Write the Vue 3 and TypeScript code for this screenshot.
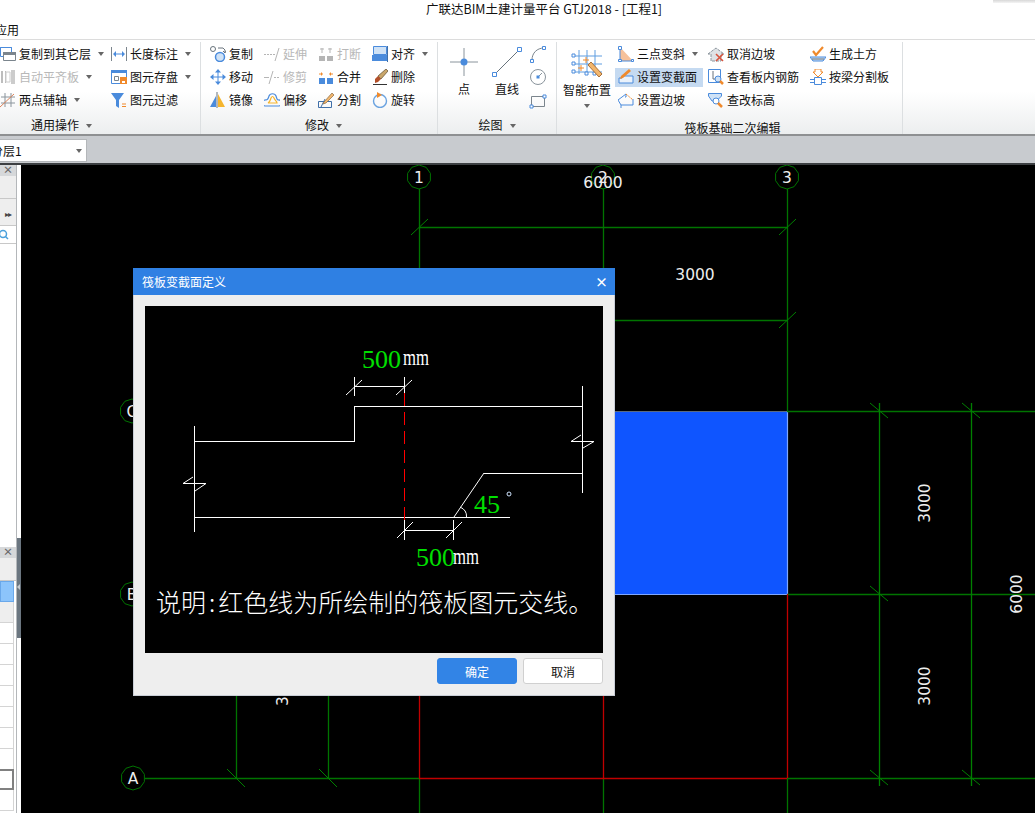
<template>
  <div class="app">
    <div class="corner" />
    <header class="title">广联达BIM土建计量平台 GTJ2018 - [工程1]</header>
    <div class="menu"><span>应用</span></div>

    <div class="ribbon">
      <section class="group g-common">
        <div class="tools">
          <div v-for="t in commonTools" :key="t.label" class="tool" :class="{ off: t.off }">
            <svg class="ico" viewBox="0 0 16 16" v-html="icons[t.icon]" />
            <span>{{ t.label }}</span>
            <i v-if="t.caret" class="caret" />
          </div>
        </div>
        <div class="label">通用操作<i class="caret" /></div>
      </section>

      <section class="group g-edit">
        <div class="tools">
          <div v-for="t in editTools" :key="t.label" class="tool" :class="{ off: t.off }">
            <svg class="ico" viewBox="0 0 16 16" v-html="icons[t.icon]" />
            <span>{{ t.label }}</span>
            <i v-if="t.caret" class="caret" />
          </div>
        </div>
        <div class="label">修改<i class="caret" /></div>
      </section>

      <section class="group g-draw">
        <div class="draw-row">
          <div class="big">
            <svg width="34" height="34" viewBox="0 0 34 34">
              <path d="M17 3v28M3 17h28" stroke="#8a949c" fill="none" />
              <circle cx="17" cy="17" r="3.5" fill="#4a8bdc" />
            </svg>
            <span>点</span>
          </div>
          <div class="big">
            <svg width="34" height="34" viewBox="0 0 34 34">
              <path d="M4 30L30 4" stroke="#68737c" fill="none" />
              <path d="M2.500 27.500h4v4h-4zM27.500 2.500h4v4h-4z" fill="#fff" stroke="#4a8bdc" />
            </svg>
            <span>直线</span>
          </div>
          <div class="mini">
            <svg width="18" height="18" viewBox="0 0 18 18">
              <path d="M3 15C3 8 8 3 15 3" stroke="#7b858d" fill="none" />
              <path d="M1.500 14.500h3v3h-3zM13.500 1.500h3v3h-3z" fill="#fff" stroke="#4a8bdc" />
            </svg>
            <svg width="18" height="18" viewBox="0 0 18 18">
              <circle cx="9" cy="9" r="7.500" stroke="#8a949c" fill="none" />
              <path d="M9 9l4-4" stroke="#8a949c" />
              <rect x="7.500" y="7.500" width="3" height="3" fill="#4a8bdc" />
            </svg>
            <svg width="18" height="18" viewBox="0 0 18 18">
              <path d="M2.500 5.500h13v10h-13z" stroke="#7b858d" fill="none" />
              <path d="M1 14h3v3H1zM14 4h3v3h-3z" fill="#fff" stroke="#4a8bdc" />
            </svg>
          </div>
        </div>
        <div class="label">绘图<i class="caret" /></div>
      </section>

      <section class="group g-raft">
        <div class="raft-row">
          <div class="smart">
            <svg width="34" height="34" viewBox="0 0 34 34">
              <path d="M9 2v24M17 2v24M25 2v24M3 8h29M3 16h29M3 24h29" stroke="#5f9de0" fill="none" />
              <path d="M2 6h3v3H2zM2 14h3v3H2zM2 22h3v3H2zM15 24h3v3h-3zM23 24h3v3h-3z" fill="#fff" stroke="#4a8bdc" />
              <path d="M13 12h6M16 9v6M8 20h6M11 17v6" stroke="#f08a2c" />
              <path d="M18 17l3-3 11 12-3 3z" fill="#f2b66d" stroke="#a8703a" />
            </svg>
            <span>智能布置</span>
            <i class="caret" />
          </div>
          <div class="tools">
            <div v-for="t in raftTools" :key="t.label" class="tool" :class="{ on: t.active }">
              <svg class="ico" viewBox="0 0 16 16" v-html="icons[t.icon]" />
              <span>{{ t.label }}</span>
              <i v-if="t.caret" class="caret" />
            </div>
          </div>
        </div>
        <div class="label">筏板基础二次编辑</div>
      </section>
    </div>

    <div class="strip">
      <div class="combo"><span>分层1</span><i class="caret" /></div>
    </div>

    <main class="main">
      <aside class="side">
        <div class="pane pane-top">
          <div class="pane-head">×</div>
          <div class="pane-bar" />
          <div class="pane-bar tall"><span class="more">▸▸</span></div>
          <div class="pane-search">
            <svg width="12" height="12" viewBox="0 0 12 12">
              <circle cx="3" cy="5" r="3.500" fill="none" stroke="#4aa0dc" stroke-width="1.500" />
              <path d="M5.500 7.500l2.500 2.500" stroke="#4aa0dc" stroke-width="1.500" />
            </svg>
          </div>
        </div>
        <div class="pane pane-bottom">
          <div class="pane-head">×</div>
          <div class="pane-bar" />
          <div v-for="(r, i) in paneRows" :key="i" class="pane-row" :class="r" />
        </div>
        <div class="drag"><i /></div>
      </aside>

      <svg class="canvas" width="1014" height="648" viewBox="21 165 1014 648">
        <rect x="419" y="411" width="368" height="183" fill="#0f55ff" />
        <path d="M419 411.500H787" stroke="#5a6a80" />
        <path d="M787.500 411V594M419 594.500H787" stroke="#7fa8ff" stroke-width="1.200" />

        <g class="axis" stroke="#007400" stroke-width="1.300" fill="none">
          <path d="M419.500 189V411M419.500 778V813M603.500 189V411M603.500 778V813M787.500 189V411M787.500 778V813" />
          <path d="M145 778.500H419M787 778.500H1035M787 411.500H1035M787 594.500H1035" />
          <path d="M236.500 696V778M328.500 696V778" />
          <path d="M419 227.500H787M419 320.500H787" />
          <path d="M879.500 403V786M971.500 403V786" stroke="#008000" />
          <path d="M411 235l17-16M779 235l17-16M779 328l17-16" stroke="#008000" stroke-width="1" />
          <path d="M227 769l18 18M319 769l18 18M870 403l18 15M870 586l18 15M870 770l18 15M962 403l18 15M962 770l18 15" stroke="#008000" stroke-width="1" />
          <polygon v-for="b in bubbles" :key="b.label" :points="ring(b.x, b.y)" stroke-width="1" />
        </g>
        <path d="M419.500 411V778M603.500 411V778M787.500 594V778M419 778.500H787" stroke="#c00000" stroke-width="1.300" fill="none" />

        <g class="cad-text" fill="#eee">
          <text v-for="b in bubbles" :key="b.label" :x="b.x" :y="b.y + 6" text-anchor="middle">{{ b.label }}</text>
          <text x="603" y="188" text-anchor="middle">6000</text>
          <text x="511" y="280" text-anchor="middle">3000</text>
          <text x="695" y="280" text-anchor="middle">3000</text>
          <text transform="translate(930 503) rotate(-90)" text-anchor="middle">3000</text>
          <text transform="translate(930 686) rotate(-90)" text-anchor="middle">3000</text>
          <text transform="translate(1022 594) rotate(-90)" text-anchor="middle">6000</text>
          <text transform="translate(288 706) rotate(-90)">3000</text>
        </g>
      </svg>
    </main>

    <div class="dialog">
      <div class="dlg-title"><span>筏板变截面定义</span><b>×</b></div>
      <div class="dlg-body">
        <svg class="sketch" width="458" height="347" viewBox="145 306 458 347">
          <g stroke="#fff" fill="none" shape-rendering="crispEdges">
            <path d="M194.500 426V532M194 441.500H354.500V406.500H582.500M582.500 386V493" />
            <path d="M194 517.500H510M484 473.500H582" />
            <path d="M354 386.500H404M354.500 377V396M404.500 377V396" />
            <path d="M404 530.500H454M404.500 520V540M453.500 520V540" />
          </g>
          <g stroke="#fff" fill="none">
            <path d="M484 473L454 517M346 395l16-15M396 395l16-15M397 538l16-16M446 538l16-16" />
            <path d="M183 483.500H206L195 491M183 483.500L193 477" />
            <path d="M571 441.500H594L583 448M571 441.500L581 435" />
            <path d="M460 507Q467 510 466.500 517" />
          </g>
          <path d="M404.500 393V520" stroke="#f00" stroke-dasharray="13 6" fill="none" />

          <g class="num">
            <text x="362" y="368">500</text>
            <text x="474" y="513">45</text>
            <text x="416" y="566">500</text>
          </g>
          <g class="unit">
            <text x="403" y="365" textLength="26" lengthAdjust="spacingAndGlyphs">mm</text>
            <text x="453" y="564" textLength="26" lengthAdjust="spacingAndGlyphs">mm</text>
          </g>
          <circle cx="509" cy="494" r="2" fill="none" stroke="#cfe4ff" />
          <text class="note" x="156" y="612">说明<tspan dx="3">:</tspan><tspan dx="3">红色线为所绘制的筏板图元交线。</tspan></text>
        </svg>
        <div class="dlg-foot">
          <button class="btn primary">确定</button>
          <button class="btn">取消</button>
        </div>
      </div>
    </div>
  </div>
</template>

<script setup lang="ts">
interface Tool {
  icon: string
  label: string
  caret?: boolean
  off?: boolean
  active?: boolean
}

// laid out column by column by the grid
const commonTools: Tool[] = [
  { icon: 'copyLayer', label: '复制到其它层', caret: true },
  { icon: 'autoAlign', label: '自动平齐板', caret: true, off: true },
  { icon: 'aux', label: '两点辅轴', caret: true },
  { icon: 'lenDim', label: '长度标注', caret: true },
  { icon: 'save', label: '图元存盘', caret: true },
  { icon: 'filter', label: '图元过滤' },
]

const editTools: Tool[] = [
  { icon: 'copy', label: '复制' },
  { icon: 'move', label: '移动' },
  { icon: 'mirror', label: '镜像' },
  { icon: 'extend', label: '延伸', off: true },
  { icon: 'trim', label: '修剪', off: true },
  { icon: 'offset', label: '偏移' },
  { icon: 'breakIt', label: '打断', off: true },
  { icon: 'merge', label: '合并' },
  { icon: 'split', label: '分割' },
  { icon: 'align', label: '对齐', caret: true },
  { icon: 'erase', label: '删除' },
  { icon: 'rotate', label: '旋转' },
]

const raftTools: Tool[] = [
  { icon: 'threePoint', label: '三点变斜', caret: true },
  { icon: 'section', label: '设置变截面', active: true },
  { icon: 'slope', label: '设置边坡' },
  { icon: 'noSlope', label: '取消边坡' },
  { icon: 'rebar', label: '查看板内钢筋' },
  { icon: 'elev', label: '查改标高' },
  { icon: 'earth', label: '生成土方' },
  { icon: 'beamSplit', label: '按梁分割板' },
]

const icons: Record<string, string> = {
  copyLayer: '<path d="M0 1h12v3H0z" fill="#4a8bdc"/><path d="M.5 1.500h11v9H.5z" fill="#fff" stroke="#4a8bdc"/><path d="M3.500 6.500h12v8h-12z" fill="#fff" stroke="#7b858d"/><path d="M3 6h13v3H3z" fill="#7b858d"/>',
  autoAlign: '<path d="M1 2h2v12H1zM5 2h1v12H5z" fill="#bdbdbd"/><path d="M6 3h4v10H6z" fill="#fff" stroke="#ccc"/><path d="M11 1h4v14h-4z" fill="#ccc"/>',
  aux: '<path d="M5 1v14M11 1v14M1 5h14M1 11h14" stroke="#8a949c" fill="none"/><path d="M0 15L14 2" stroke="#d9825a" fill="none"/>',
  lenDim: '<path d="M.5 1v14M15.500 1v14" stroke="#7b858d" fill="none"/><path d="M3 8h10" stroke="#4a8bdc" fill="none"/><path d="M2 8l3-3v6zM14 8l-3-3v6z" fill="#4a8bdc"/>',
  save: '<path d="M.5 1.500h15v13H.5z" fill="#fff" stroke="#4a8bdc"/><path d="M0 1h16v3H0z" fill="#4a8bdc"/><path d="M3.500 7.500h4v4h-4z" fill="none" stroke="#7b858d"/><path d="M9 8h7v7H9z" fill="#f08a2c"/><path d="M11 12h3v2h-3z" fill="#fff"/>',
  filter: '<path d="M0 1h13L8 8v8L5 14V8z" fill="#4a8bdc"/><path d="M11 12h4M11 14.500h4" stroke="#f08a2c" fill="none"/>',
  copy: '<circle cx="3" cy="3" r="2.500" fill="#fff" stroke="#68737c"/><circle cx="10" cy="11" r="4.500" fill="#cfe2f6" stroke="#4a8bdc" stroke-width="1.500"/><path d="M8 2h5l2 2v2M13 5l2 2 1-2" stroke="#68737c" fill="none"/>',
  move: '<path d="M8 2v12M2 8h12" stroke="#4a8bdc" fill="none"/><path d="M8 0l3 3.500H5zM8 16l3-3.500H5zM0 8l3.500-3v6zM16 8l-3.500-3v6z" fill="#4a8bdc"/>',
  mirror: '<path d="M7 0v16" stroke="#68737c" fill="none"/><path d="M6 4v11H0z" fill="#4a8bdc"/><path d="M8 2v13h7z" fill="#f5b52e"/>',
  extend: '<path d="M0 8.500h2M3 8.500h2M6 8.500h2M9 8.500h2" stroke="#b5b5b5" fill="none"/><path d="M11 15L15 2" stroke="#b5b5b5" fill="none"/>',
  trim: '<path d="M0 8.500h5M10 8.500h2M13 8.500h2" stroke="#b5b5b5" fill="none"/><path d="M5 15L9 2" stroke="#b5b5b5" fill="none"/>',
  breakIt: '<path d="M1 10h6v5H1zM9 10h6v5H9z" fill="#b5b5b5"/><path d="M4 2v5M12 2v5M2 3h4M10 3h4" stroke="#b5b5b5" fill="none"/>',
  merge: '<path d="M1 9h6v6H1zM9 9h6v6H9z" fill="#4a8bdc"/><path d="M3 3l2 2-2 2zM13 3l-2 2 2 2z" fill="#f08a2c"/><path d="M1 5h3M15 5h-3" stroke="#f08a2c"/>',
  split: '<path d="M.5 9.500h13v6H.5z" fill="none" stroke="#3f6fa8"/><path d="M3 15L7 7" stroke="#3f6fa8"/><path d="M6 10l8-9 2 2-8 8-3 1z" fill="#f2b66d" stroke="#8a6a42" stroke-width=".7"/>',
  offset: '<path d="M1 14a3 3 0 0 1 1-6c2 0 2-1 3-4 1-3 6-3 7 0 1 3 1 4 2 4a3 3 0 0 1 1 6z" fill="none" stroke="#4a8bdc" stroke-width="1.200"/><path d="M4 11h9c0-2-2-2-3-5-1-2-2-2-3 0-1 3-1 4-3 5z" fill="none" stroke="#f5b52e" stroke-width="1.200"/>',
  align: '<path d="M1.500 .5h13v8h-13z" fill="#cfe2f6" stroke="#4a8bdc"/><path d="M0 9h16v6H0z" fill="#4a8bdc"/><path d="M15.500 0v16" stroke="#3f6fa8"/>',
  erase: '<path d="M1 15.500h14" stroke="#333" fill="none"/><path d="M6 7l8-7 2 2-7 8z" fill="#c9a66b" stroke="#5d4a2c" stroke-width=".7"/><path d="M3 10l3-3 3 3-3 3-3 1z" fill="#b4502a"/>',
  rotate: '<circle cx="8" cy="9" r="6.500" fill="none" stroke="#6aa3e0" stroke-width="1.400"/><path d="M5 0v6l5-3z" fill="#f08a2c"/>',
  threePoint: '<path d="M2 1v14h13z" fill="#f6c19a"/><path d="M2 1v14h13" stroke="#4a8bdc" fill="none"/><path d="M.5 .5h3v3h-3zM.5 13.500h3v2h-3zM13.500 13.500h2v2h-2z" fill="#fff" stroke="#4a8bdc"/>',
  section: '<path d="M1 9h3l2-2h9v7H1z" fill="#eaf2fb" stroke="#4a8bdc"/><path d="M3 7l8-7 2 2-8 7-3 1z" fill="#f08a2c"/>',
  slope: '<path d="M0 8L8 2v3h-1M8 13H3v3M3 13L0 8M15 7v6H8" stroke="#4a8bdc" fill="none"/><path d="M8 2l7 6" stroke="#f08a2c" stroke-dasharray="2 1" fill="none"/>',
  noSlope: '<path d="M0 8l8-6 8 6h-3v7H3V8z" fill="#dfe2e5" stroke="#8a949c" stroke-dasharray="3 1"/><path d="M8 8l7 7M15 8l-7 7" stroke="#d8533d" stroke-width="1.600" fill="none"/>',
  rebar: '<path d="M.5 .5h12v13H.5z" fill="#fff" stroke="#4a8bdc"/><path d="M5 2v8h5" stroke="#68737c" fill="none"/><circle cx="10" cy="10" r="3" fill="#cfe2f6" stroke="#4a8bdc"/><path d="M12 12l3 3" stroke="#f08a2c" stroke-width="2.500"/>',
  elev: '<path d="M.5 1.500h13V4l-5 5H4L.5 4z" fill="#cfe2f6" stroke="#4a8bdc"/><circle cx="8" cy="9" r="3" fill="#fff" stroke="#4a8bdc"/><path d="M10 11l4 4" stroke="#f08a2c" stroke-width="2.500"/>',
  earth: '<path d="M3 5l3 4 7-8" stroke="#f08a2c" stroke-width="2.200" fill="none"/><path d="M0 11h16l-3 4H3z" fill="#cfe2f6" stroke="#4a8bdc"/><path d="M2 13h12" stroke="#68737c"/>',
  beamSplit: '<path d="M5 0h6v3h2l-5 5-5-5h2z" fill="#fff" stroke="#f08a2c"/><path d="M4.500 8.500h7v7h-7z" fill="#fff" stroke="#4a8bdc"/><path d="M0 10.500h4M12 10.500h4M0 13.500h4M12 13.500h4" stroke="#4a8bdc"/>',
}

const bubbles = [
  { label: '1', x: 419, y: 177 },
  { label: '2', x: 603, y: 177 },
  { label: '3', x: 787, y: 177 },
  { label: 'C', x: 132, y: 411 },
  { label: 'B', x: 132, y: 594 },
  { label: 'A', x: 133, y: 778 },
]

// axis bubbles are low-poly circles in the CAD view
const ring = (x: number, y: number) => {
  const pts: string[] = []
  for (let i = 0; i < 10; i++) {
    const a = (Math.PI * 2 * i) / 10 + Math.PI / 10
    pts.push(`${(x + Math.cos(a) * 12).toFixed(1)},${(y + Math.sin(a) * 12).toFixed(1)}`)
  }
  return pts.join(' ')
}

const paneRows = ['sel', 'bar', '', '', '', '', '', '', '', 'box', '']
</script>

<style>
html, body {
  margin: 0;
  background: #000;
  overflow: hidden;
}
</style>

<style scoped>
.app {
  position: relative;
  width: 1035px;
  height: 813px;
  overflow: hidden;
  background: #fff;
  color: #111;
  font-family: "Noto Sans CJK SC", "Liberation Sans", sans-serif;
  font-size: 12px;
}

.corner {
  position: absolute;
  top: 0;
  right: 0;
  width: 42px;
  height: 3px;
  background: linear-gradient(#d8d8d8, #f4f4f4);
}

.title {
  height: 20px;
  line-height: 18px;
  padding-left: 53px;
  text-align: center;
  font-size: 12.500px;
}

.menu {
  height: 19px;
  line-height: 20px;
  border-bottom: 1px solid #dcdcdc;
}

.menu span {
  margin-left: -5px;
}

.ribbon {
  display: flex;
  height: 96px;
  background: linear-gradient(#fff 55%, #eceeef);
  border-bottom: 2px solid #8e9092;
  box-sizing: border-box;
}

.group {
  display: flex;
  flex-direction: column;
  flex: none;
  box-sizing: border-box;
  border-right: 1px solid #dcdfe1;
  margin-top: 2px;
  padding-top: 3px;
}

.g-common { width: 201px; }
.g-edit { width: 237px; padding-left: 9px; }
.g-draw { width: 119px; }
.g-raft { width: 346px; padding-left: 6px; }

.tools {
  display: grid;
  grid-auto-flow: column;
  grid-template-rows: repeat(3, 19px);
  row-gap: 4px;
}

.g-common .tools { grid-template-columns: 111px auto; }
.g-edit .tools { grid-template-columns: repeat(4, 54px); }
.g-raft .tools { grid-template-columns: 90px 102px auto; margin-left: 2px; }

.tool {
  display: flex;
  align-items: center;
  gap: 3px;
  white-space: nowrap;
  box-sizing: border-box;
  padding-bottom: 2px;
}

.g-raft .tool { padding-left: 3px; }
.tool.off { color: #b8b8b8; }
.tool.on { background: #c5daf1; width: 88px; }

.ico {
  width: 16px;
  height: 16px;
  flex: none;
}

.caret {
  display: inline-block;
  width: 0;
  height: 0;
  margin-left: 4px;
  border: 3.500px solid transparent;
  border-top: 4px solid #666;
  border-bottom: 0;
}

.label {
  margin-top: auto;
  height: 18px;
  line-height: 18px;
  text-align: center;
}

.label .caret { margin-left: 7px; vertical-align: 2px; }
.g-common .label { text-align: left; padding-left: 31px; }
.g-raft .label { height: 16px; line-height: 20px; }

.draw-row {
  display: flex;
  padding-left: 9px;
}

.big {
  display: flex;
  flex-direction: column;
  align-items: center;
  width: 34px;
  margin-right: 9px;
}

.big span { margin-top: 1px; }

.mini {
  display: flex;
  flex-direction: column;
  gap: 5px;
  margin-left: -4px;
}

.raft-row {
  display: flex;
}

.smart {
  display: flex;
  flex-direction: column;
  align-items: center;
  width: 52px;
  flex: none;
  padding-top: 3px;
  box-sizing: border-box;
  margin-left: -2px;
}

.smart span { margin-top: -1px; white-space: nowrap; }
.smart .caret { margin: 6px 0 0; }

.strip {
  background: #c8cbcf;
  border-bottom: 2px solid #3c3f42;
  box-sizing: border-box;
  height: 29px;
  padding-top: 3px;
}

.combo {
  display: flex;
  align-items: center;
  justify-content: space-between;
  width: 87px;
  height: 23px;
  box-sizing: border-box;
  background: #fff;
  border: 1px solid #b4b7ba;
  border-left: 0;
  padding-right: 4px;
  overflow: hidden;
}

.combo span { margin-left: -9px; }

.main {
  display: flex;
  height: 648px;
}

.side {
  position: relative;
  width: 21px;
  flex: none;
  background: #fff;
}

.pane {
  width: 17px;
  box-sizing: border-box;
  border-right: 1px solid #b4b7ba;
  overflow: hidden;
}

.pane-top { height: 382px; }
.pane-bottom { height: 266px; }

.pane-head {
  height: 11px;
  line-height: 10px;
  background: #d6d8da;
  color: #666;
  font-size: 10px;
  font-weight: 700;
  text-align: center;
}

.pane-bar {
  height: 23px;
  background: #eeeeee;
  border-bottom: 1px solid #c8c8c8;
  box-sizing: border-box;
}

.pane-bar.tall {
  height: 27px;
  line-height: 26px;
  text-align: center;
}

.more {
  font-size: 8px;
  color: #444;
  letter-spacing: -1px;
}

.pane-search {
  height: 18px;
  padding-top: 3px;
  box-sizing: border-box;
  border-bottom: 1px solid #c8c8c8;
}

.pane-search svg { display: block; }

.pane-row {
  width: 14px;
  height: 21px;
  box-sizing: border-box;
  border-bottom: 1px solid #d4d4d4;
  border-right: 1px solid #d4d4d4;
}

.pane-row.bar { background: #eeeeee; }
.pane-row.sel { background: #8cc4fb; border: 1px solid #6aa8ea; }
.pane-row.box { border: 2px solid #808080; border-left: 0; margin-top: -1px; }

.drag {
  position: absolute;
  left: 17px;
  top: 373px;
  width: 4px;
  height: 100px;
  background: #6b7680;
}

.drag i {
  position: absolute;
  left: 0;
  top: 46px;
  border: 3px solid transparent;
  border-right: 3px solid #c8ccd0;
  border-left: 0;
}

.canvas {
  display: block;
  flex: none;
  background: #000;
}

.cad-text text {
  font-family: "DejaVu Sans", sans-serif;
  font-size: 15.500px;
}

.dialog {
  position: absolute;
  left: 133px;
  top: 268px;
  width: 482px;
  height: 428px;
  box-sizing: border-box;
  background: #eeeeee;
  border: 1px solid #c9ced6;
  border-top: 0;
}

.dlg-title {
  display: flex;
  align-items: center;
  justify-content: space-between;
  height: 27px;
  margin: 0 -1px;
  padding: 0 7px 0 9px;
  background: #2f80e3;
  color: #fff;
  font-size: 12px;
}

.dlg-title b {
  font-size: 13px;
  font-weight: 700;
}

.dlg-body {
  padding: 11px 11px 0;
}

.sketch {
  display: block;
  background: #000;
}

.num text {
  fill: #00e000;
  font-family: "Liberation Serif", serif;
  font-size: 26px;
}

.unit text {
  fill: #fff;
  font-family: "Liberation Serif", serif;
  font-size: 24px;
}

.note {
  fill: #fff;
  font-family: "Noto Sans CJK SC", sans-serif;
  font-size: 25px;
  font-weight: 300;
}

.dlg-foot {
  display: flex;
  justify-content: flex-end;
  gap: 6px;
  margin-top: 5px;
}

.btn {
  width: 80px;
  height: 26px;
  padding: 0;
  background: #fff;
  border: 1px solid #d0d0d0;
  border-radius: 3px;
  color: #111;
  font: inherit;
}

.btn.primary {
  background: #3284e6;
  border-color: #3284e6;
  color: #fff;
}
</style>
